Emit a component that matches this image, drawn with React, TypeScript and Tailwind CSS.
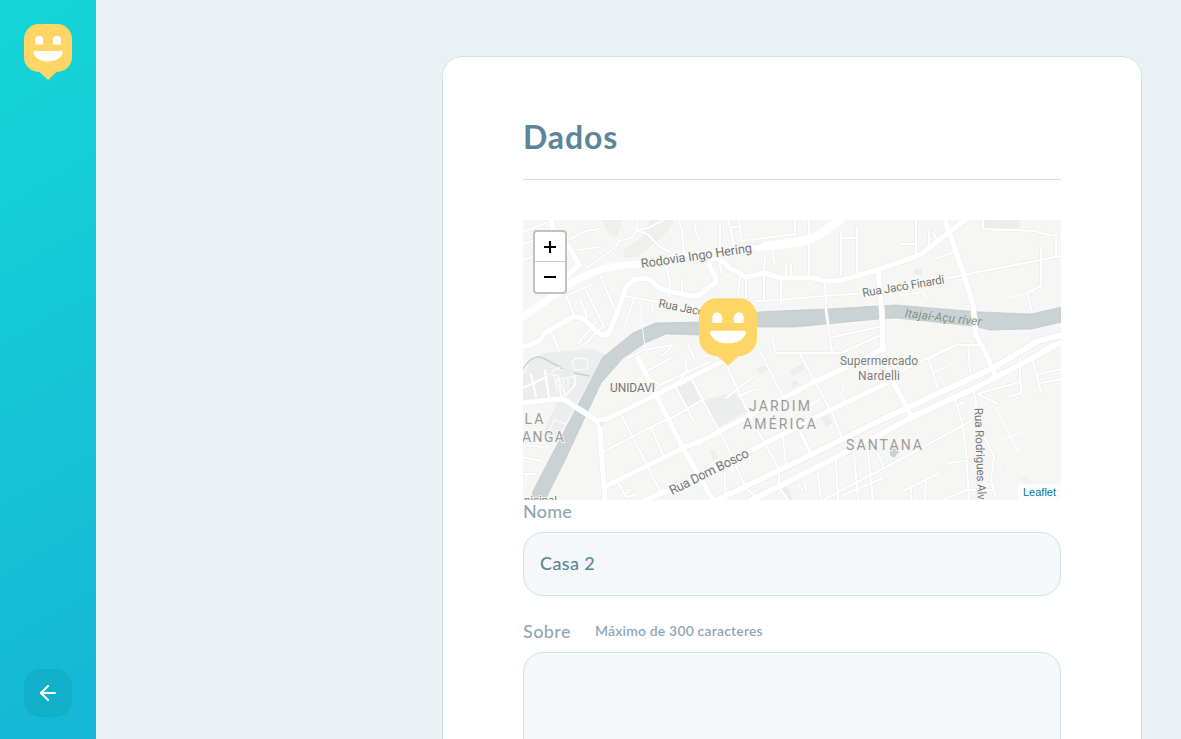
import React from 'react';
import { FiArrowLeft } from 'react-icons/fi';

function HappyMark({ className }: { className?: string }) {
  return (
    <svg viewBox="0 0 48 56" className={className} aria-hidden="true">
      <path
        fill="#FFD666"
        d="M15 0H33A15 15 0 0 1 48 15V33A15 15 0 0 1 33 48H32.500L24 56L15.500 48H15A15 15 0 0 1 0 33V15A15 15 0 0 1 15 0Z"
      />
      <path
        fill="#fff"
        d="M11 20.5V16a4.1 4.1 0 0 1 8.2 0v4.5ZM28.8 20.5V16a4.1 4.1 0 0 1 8.2 0v4.5ZM10.5 27h27q1.6 0 1.3 1.6C37.8 33.8 31.8 37.4 24 37.4S10.200 33.800 9.200 28.600Q9 27 10.500 27Z"
      />
    </svg>
  );
}

const thinRoads = [
  'M0 12L25 2', 'M0 24L20 17', 'M0 40L12 36', 'M47 19L62 11L77 9', 'M55 30L77 27',
  'M64 48L93 27L96 21L108 18L115 10L125 8L141 0', 'M115 0L113 10L124 14L137 27L147 32',
  'M156 0L159 10L161 32', 'M171 0L173 13L178 22',
  'M143 44L147 63L146 76', 'M159 61V73', 'M45 75L70 64', 'M43 75L51 95', 'M57 79L64 97', 'M63 70L82 108', 'M77 55L92 90',
  'M102 76L135 82L157 88', 'M111 79L102 106', 'M130 83L129 93',
  'M74 101L55 123', 'M79 107L60 126', 'M28 111L36 131',
  'M105 138L120 130L150 125', 'M165 125L171 138', 'M149 126L139 136',
  'M197 0V11L197 30', 'M205 0L209 15L211 27', 'M208 7H215', 'M216 0L219 22', 'M219 21L272 14V0', 'M286 0V19L286 57',
  'M197 43L198 52L200 54', 'M217 56L215 73', 'M223 56V78', 'M242 35L241 52V81', 'M249 28L251 44L253 44', 'M263 45V55', 'M268 45V55',
  'M258 58L258 85', 'M233 81L255 80L300 76', 'M318 13V55', 'M334 8V54', 'M318 18H334', 'M393 0V35', 'M378 24H391', 'M406 11V26', 'M410 13L414 20',
  'M411 39L431 32', 'M460 0V9L512 11L521 14L533 15V36', 'M518 27V66L504 73L508 89', 'M300 76L360 72',
  'M377 73L379 75L399 72L404 78', 'M425 58L445 54L538 36', 'M302 62L303 90L309 132',
  'M309 117L356 107', 'M250 118L252 133L318 133L356 116', 'M180 136L215 134', 'M238 133L258 173L288 232', 'M277 134L309 193L319 218',
  'M200 138L223 188L243 226L257 250', 'M203 178L231 156', 'M216 176L233 169', 'M283 188L297 179',
  'M162 138L164 150L152 168', 'M124 151L150 137', 'M125 157L137 165L171 149L187 142',
  'M168 157L180 181L201 220L222 266', 'M152 166L171 202', 'M78 233L128 207L154 195L181 179',
  'M98 194L125 247L137 271', 'M128 207L140 235', 'M150 207L161 226', 'M96 264L103 277L114 274', 'M101 274L108 270',
  'M172 218L180 230', 'M227 237V242', 'M201 239L203 280', 'M224 269L237 280', 'M260 217L263 245', 'M268 195L288 235',
  'M256 255L256 268L265 280', 'M275 264L279 270', 'M281 260L283 270', 'M295 253L298 280', 'M313 241L315 280', 'M331 233L335 280',
  'M344 225L350 280', 'M300 280L365 246L402 226L448 201', 'M355 233L360 246', 'M321 275L360 258',
  'M432 180L438 197L443 230L446 280', 'M435 185L441 182', 'M451 172L454 190L463 220L471 237L468 260L472 275',
  'M455 174L475 184', 'M457 173L497 162V138', 'M484 177L498 173V161',
  'M509 138L518 172', 'M514 155L538 149', 'M519 163L538 159', 'M405 138L415 168', 'M412 152L423 147', 'M370 155L405 138L430 126',
  'M425 243L441 241', 'M380 271L416 253', 'M388 268V280', 'M403 260L402 280', 'M420 280L444 270H470', 'M445 125L447 151',
  'M407 138L433 125H461', 'M8 154L13 177', 'M22 150L26 178', 'M0 168L24 157', 'M0 225L20 227', 'M0 237L18 241', 'M0 254H14', 'M4 255L2 264',
];

const footPaths = [
  'M118 81L118 98L123 134', 'M485 78L504 73', 'M321 164L318 176L322 180L325 188', 'M473 187L494 230', 'M479 220L500 211', 'M487 232L498 227', 'M99 249L103 258',
  'M49 142L53 138L64 139L65 149L52 150Z', 'M33 160L53 156L52 166L39 177Z', 'M25 154L35 156L42 175', 'M35 149L50 153L52 164L42 178M31 153L34 172M36 158L38 176M40 158L42 174M45 158V170M37 147L28 152', 'M26 211L31 200L42 204',
];

const majorRoads = [
  'M0 97L50 62L70 52Q90 45 117 44L150 37L233 26L260 24Q280 22 287 19Q296 16 303 10L317 0',
  'M0 127L15 122L23 112L50 97Q57 96 62 100L72 110Q83 121 88 108L97 85L103 67Q109 58 118 59Q126 57 131 63Q136 69 145 71L168 76Q181 75 182 70L192 63Q195 60 190 53L186 44Q187 39 193 39Q200 40 205 47L223 57L242 53L257 58L290 58Q306 64 327 58L360 48L397 35L442 0',
  'M28 0L31 15L47 28L56 45L42 58',
  'M422 0L440 52L450 85L453 115L465 138L472 155',
  'M355 50L359 92L360 132L369 160L388 195',
  'M0 183L35 179Q43 179 48 184L73 200H82L133 175L180 151L216 134',
  'M73 200Q77 204 77 211L82 280',
  'M83 266L160 228L180 220L293 161L329 145L359 129',
  'M115 138L133 175L160 228L180 263L190 280',
  'M123 280L148 269L190 250L227 231L305 191L360 165L370 158',
];

const highways = [
  'M194 280L257 250L360 199L470 148L515 121L538 115',
  'M228 280L257 266L360 213L387 198L450 169L508 139L530 126L538 123',
];

const mapLabels = [
  { text: 'Rodovia Ingo Hering', x: 118.5, y: 48, size: 12.8, length: 112, angle: -8.2, color: '#767676' },
  { text: 'Rua Jacó Finardi', x: 340, y: 77, size: 11.8, length: 83, angle: -9.5, color: '#767676' },
  { text: 'UNIDAVI', x: 87, y: 172, size: 12, length: 45, angle: 0, color: '#757575' },
  { text: 'Supermercado', x: 317, y: 145, size: 12, length: 78, angle: 0, color: '#7e7e7e' },
  { text: 'Nardelli', x: 335, y: 160, size: 12, length: 42, angle: 0, color: '#7e7e7e' },
  { text: 'JARDIM', x: 226, y: 191, size: 14, length: 61, angle: 0, color: '#9c9c9c' },
  { text: 'AMÉRICA', x: 220, y: 209, size: 14, length: 73, angle: 0, color: '#9c9c9c' },
  { text: 'SANTANA', x: 323, y: 230, size: 14, length: 76, angle: 0, color: '#9c9c9c' },
  { text: 'LA', x: 1.5, y: 204, size: 14, length: 19, angle: 0, color: '#9c9c9c' },
  { text: 'ANGA', x: -1, y: 222, size: 14, length: 42, angle: 0, color: '#9c9c9c' },
  { text: 'Rua Dom Bosco', x: 149, y: 275, size: 13, length: 87, angle: -26.5, color: '#767676' },
  { text: 'nicipal', x: 1, y: 284, size: 11.5, length: 33, angle: 0, color: '#7e7e7e' },
];

function MapDrawing() {
  return (
    <svg viewBox="0 0 538 280" className="block h-[280px] w-[538px] font-normal" fontFamily="Roboto, sans-serif">
      <rect width="538" height="280" fill="#f6f6f5" />
      <g fill="#ebeeed">
        <path d="M78 0H100L94 17L87 15ZM101 29L119 18L127 0H151L143 13L129 25L116 36L101 38Z" fill="#efefed" />
        <path d="M0 155L7 142L21 133L70 129L82 135L53 184L35 217H20L22 208L35 180L0 184Z" />
        <path d="M152 167L167 158L178 179L164 187ZM182 180L211 172L225 190L195 208ZM461 0H497V8H460ZM391 49H399V55H391Z" />
        <path d="M267 151L279 144L282 149L270 156ZM234 149L242 145L244 150L236 154ZM268 162L274 160L276 164L269 168ZM298 198L305 194L309 203L303 207ZM187 231L192 230L195 238L190 240Z" />
        <path d="M478 244L484 249L483 253ZM497 258H504L509 263H502Z" fill="#f0f1ef" />
        <path d="M259 267L267 268L269 280H263Z" />
      </g>
      <path d="M-3 154Q8 133 20 138L35 146L42 151L66 156" fill="none" stroke="#cbd2d1" strokeWidth="1.5" />
      <path
        fill="#cad2d3"
        stroke="#b8c4c5"
        strokeWidth=".6"
        d="M8 280L10 271L80 137L110 113L132 103L177 102L234 92L303 89L356 86L373 85L457 92L508 94L539 87V102L508 109L467 110L450 106L373 98L356 99L303 104L272 107L234 107L177 115L143 114L122 123L100 138L78 163L43 238L28 268L22 280Z"
      />
      <path d="M367 229L375 228L376 232L371 238L367 235Z" fill="#cad2d3" />
      <g fill="none" strokeLinecap="round" strokeLinejoin="round">
        <g stroke="#eaebe9">
          {thinRoads.map((d, i) => <path key={i} d={d} strokeWidth="3.2" />)}
          {majorRoads.map((d, i) => <path key={i} d={d} strokeWidth="6.2" />)}
          {highways.map((d, i) => <path key={i} d={d} strokeWidth="7" />)}
        </g>
        <g stroke="#fff">
          {footPaths.map((d, i) => <path key={i} d={d} strokeWidth="1.1" opacity=".85" />)}
          {thinRoads.map((d, i) => <path key={i} d={d} strokeWidth="2.1" />)}
          {majorRoads.map((d, i) => <path key={i} d={d} strokeWidth="5.2" />)}
          {highways.map((d, i) => <path key={i} d={d} strokeWidth="5.8" />)}
          <path d="M0 97L50 62L70 52Q90 45 117 44" strokeWidth="7" />
          <path d="M235 27L260 24Q280 22 287 19Q296 16 303 10L317 0" strokeWidth="8.5" />
        </g>
      </g>
      <path d="M230 23L240 21L238 24L230 26Z" fill="#eeefed" />
      <path d="M76 202L82 202L78 207Z" fill="#ebecea" />
      {mapLabels.map((l) => (
        <text
          key={l.text}
          x={l.x}
          y={l.y}
          transform={`rotate(${l.angle} ${l.x} ${l.y})`}
          fontSize={l.size}
          textLength={l.length}
          fill={l.color}
          stroke="#f6f6f4"
          strokeWidth="2"
          paintOrder="stroke"
        >
          {l.text}
        </text>
      ))}
      <text x="135" y="87" transform="rotate(11 135 87)" fontSize="11.8" textLength="83" fill="#767676" stroke="#f6f6f4" strokeWidth="2" paintOrder="stroke">
        Rua Jacó Finardi
      </text>
      <text x="381.5" y="97" transform="rotate(6.5 381.5 97)" fontSize="12" fontStyle="italic" textLength="77" fill="#849294">
        Itajaí-Açu river
      </text>
      <text x="451.5" y="188" transform="rotate(88 451.5 188)" fontSize="11.8" textLength="104" fill="#767676" stroke="#f6f6f4" strokeWidth="2" paintOrder="stroke">
        Rua Rodrigues Alves
      </text>
    </svg>
  );
}

function LocationMap() {
  return (
    <div className="relative h-[280px] w-full overflow-hidden">
      <MapDrawing />
      <HappyMark className="absolute left-[176px] top-[78px] h-[68px] w-[58px]" />
      <div className="absolute left-[10px] top-[10px] flex w-[34px] flex-col rounded border-2 border-[#c1c1c0] bg-white">
        <button aria-label="Zoom in" className="flex h-[30px] items-center justify-center border-b border-[#ccc]">
          <svg viewBox="0 0 12 12" className="size-3"><path d="M0 6H12M6 0V12" stroke="#000" strokeWidth="2" /></svg>
        </button>
        <button aria-label="Zoom out" className="flex h-[30px] items-center justify-center">
          <svg viewBox="0 0 12 12" className="size-3"><path d="M0 6H12" stroke="#000" strokeWidth="2" /></svg>
        </button>
      </div>
      <div className="absolute bottom-0 right-0 flex h-4 w-[43px] items-center justify-center bg-white/70 font-['Liberation_Sans',sans-serif] text-[11px] font-normal text-[#0078A8]">
        Leaflet
      </div>
    </div>
  );
}

export default function App() {
  return (
    <div className="flex h-[739px] overflow-hidden bg-[#e9f1f5] font-[Lato,sans-serif] font-medium">
      <aside className="flex w-24 shrink-0 flex-col items-center justify-between bg-[linear-gradient(329.54deg,#15B6D6_0%,#15D6D6_100%)] pb-[22px] pt-6">
        <HappyMark className="h-14 w-12" />
        <button aria-label="Voltar" className="flex size-12 items-center justify-center rounded-2xl bg-[#12AFCB]">
          <FiArrowLeft size={24} color="#fff" />
        </button>
      </aside>
      <main className="flex flex-1 justify-end pr-[39px] pt-14">
        <form className="h-[900px] w-[700px] rounded-[20px] border border-[#D3E2E5] bg-white px-20 pt-[63px]">
          <h1 className="flex h-[60px] items-start border-b border-[#D3E2E5] text-[32px] font-bold leading-[34px] text-[#5C8599]">
            <span className="tracking-[0.9px]">Dados</span>
          </h1>
          <div className="pt-10">
            <LocationMap />
          </div>
          <div className="flex h-6 items-center pb-0.5 text-[18px] tracking-[0.2px] text-[#8FA7B3]">Nome</div>
          <input
            defaultValue="Casa 2"
            className="mt-2 block h-16 w-full rounded-[20px] border border-[#D3E2E5] bg-[#F4F8FB] px-4 pb-0.5 text-[18px] tracking-[0.4px] text-[#5C8599] outline-none"
          />
          <div className="mt-6 flex h-6 items-center gap-6 pb-0.5 text-[#8FA7B3]">
            <span className="text-[18px] tracking-[0.4px]">Sobre</span>
            <span className="pb-0.5 text-[14px] font-semibold tracking-[0.17px]">Máximo de 300 caracteres</span>
          </div>
          <textarea className="mt-2 block h-[120px] w-full resize-none rounded-[20px] border border-[#D3E2E5] bg-[#F4F8FB] outline-none" />
        </form>
      </main>
    </div>
  );
}
